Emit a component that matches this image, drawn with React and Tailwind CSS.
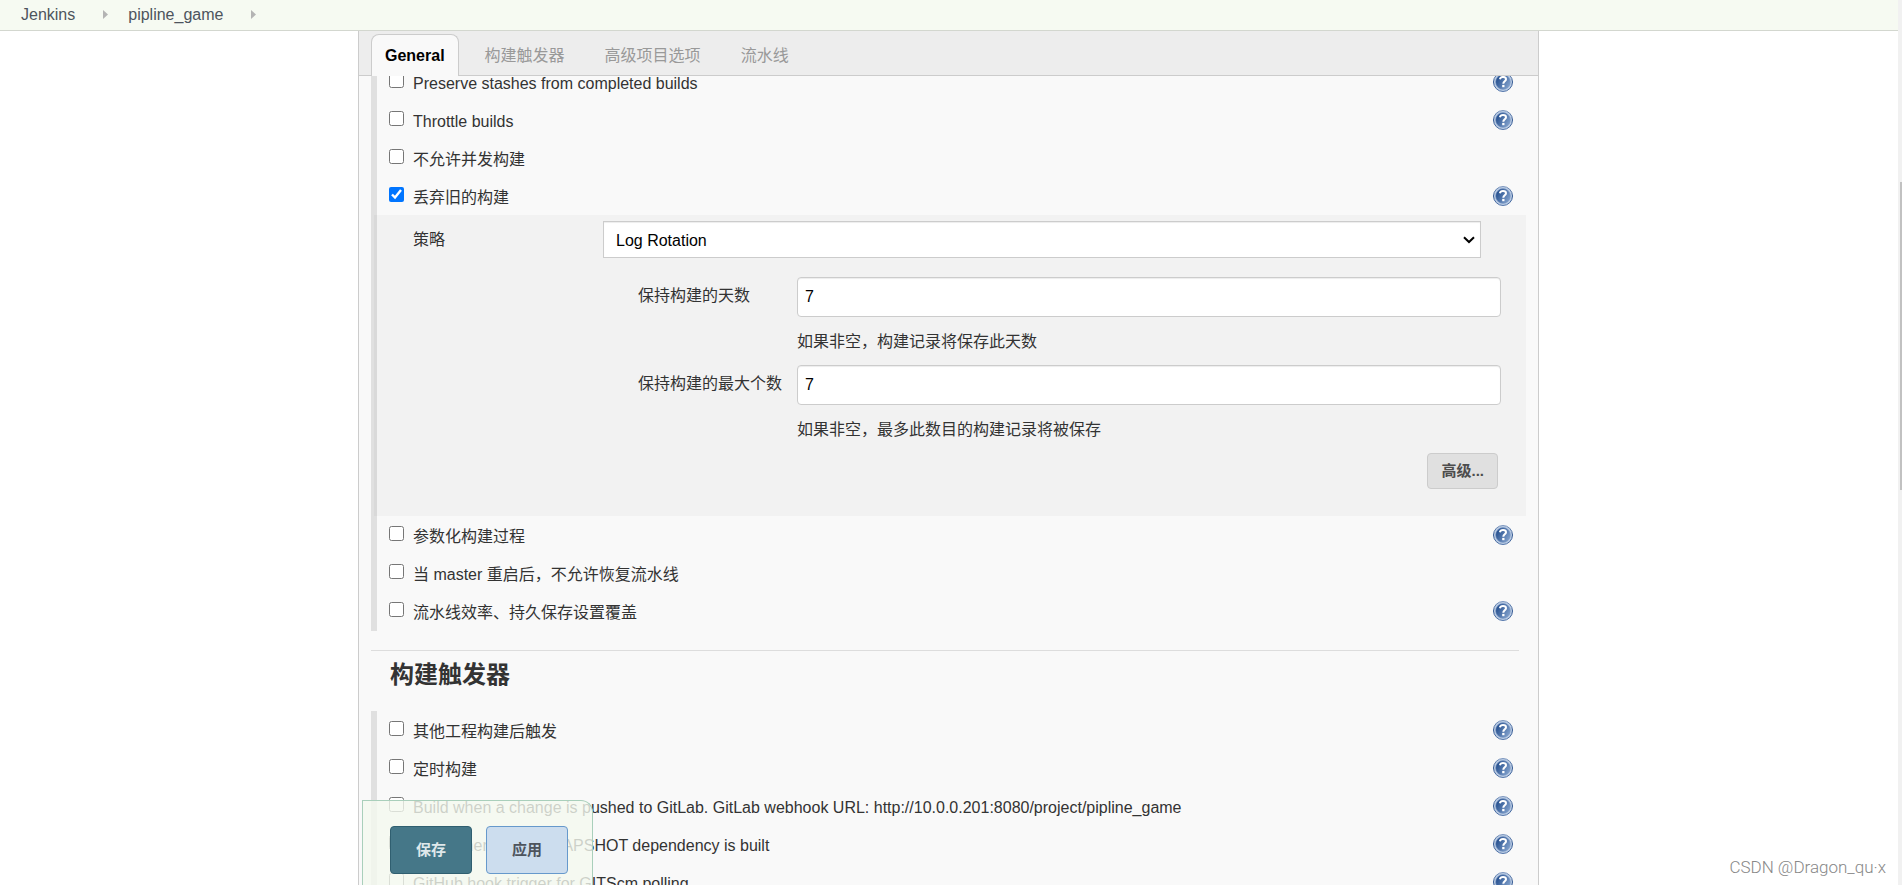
import React from "react";

const FONT = "font-['Liberation_Sans','Noto_Sans_CJK_SC',sans-serif]";

function HelpButton({ topic }) {
  return (
    <button type="button" aria-label={`Help: ${topic}`} className="mt-[9px] size-5 shrink-0">
      <svg viewBox="0 0 20 20" className="size-5" aria-hidden="true">
        <defs>
          <linearGradient id="disc" x1="0" y1="0.2" x2="1" y2="0.8">
            <stop offset="0" stopColor="#1d4889" />
            <stop offset="1" stopColor="#86a5cf" />
          </linearGradient>
          <linearGradient id="rim" x1="0" y1="0" x2="0" y2="1">
            <stop offset="0" stopColor="#7d97bf" />
            <stop offset="0.5" stopColor="#2f5590" />
            <stop offset="1" stopColor="#5577ab" />
          </linearGradient>
        </defs>
        <circle cx="10" cy="10" r="9.5" fill="#bccde4" stroke="url(#rim)" />
        <circle cx="10" cy="10" r="7.4" fill="url(#disc)" stroke="#7f9cc8" strokeWidth="0.6" />
        <path
          d="M6.9 7.2c.3-1.5 1.4-2.3 3.1-2.3 1.9 0 3 .9 3 2.3 0 2-2.7 2.1-2.7 4.5"
          fill="none"
          stroke="#fff"
          strokeWidth="2"
        />
        <rect x="9.2" y="12.9" width="2.3" height="2.3" fill="#fff" />
      </svg>
    </button>
  );
}

function OptionRow({ id, label, help, checked }) {
  return (
    <div className="flex h-[38px] items-start pr-[13px] pl-3">
      <input
        id={id}
        type="checkbox"
        defaultChecked={checked}
        className="mt-[10px] size-[15px] shrink-0 accent-[#0075ff]"
      />
      <label htmlFor={id} className="mt-[9px] ml-2 flex-1 pl-px leading-6 whitespace-nowrap">
        {label}
      </label>
      {help && <HelpButton topic={label} />}
    </div>
  );
}

function NumberField({ id, label, hint }) {
  return (
    <div className="grid grid-cols-[159px_1fr]">
      <label htmlFor={id} className="pt-[7px] leading-6">
        {label}
      </label>
      <input
        id={id}
        type="text"
        defaultValue="7"
        className="h-10 w-full rounded border border-[#ccc] bg-white px-[7px] text-black shadow-[inset_0_1px_1px_rgba(0,0,0,0.075)]"
      />
      <p className="col-start-2 flex h-12 items-center pt-[2px]">{hint}</p>
    </div>
  );
}

function Crumb({ children }) {
  return (
    <li className="flex items-center">
      <a href="#" className="text-[#4d545d]">
        {children}
      </a>
      <svg viewBox="0 0 5 9" className="mr-5 ml-7 h-[9px] w-[5px]" aria-hidden="true">
        <path d="M0 0L5 4.5L0 9Z" fill="#b4b4b4" />
      </svg>
    </li>
  );
}

const TABS = ["构建触发器", "高级项目选项", "流水线"];

const GENERAL_TOP = [
  { id: "stashes", label: "Preserve stashes from completed builds", help: true },
  { id: "throttle", label: "Throttle builds", help: true },
  { id: "concurrent", label: "不允许并发构建" },
  { id: "discard", label: "丢弃旧的构建", help: true, checked: true },
];

const GENERAL_BOTTOM = [
  { id: "params", label: "参数化构建过程", help: true },
  { id: "resume", label: "当 master 重启后，不允许恢复流水线" },
  { id: "durability", label: "流水线效率、持久保存设置覆盖", help: true },
];

const TRIGGERS = [
  { id: "upstream", label: "其他工程构建后触发", help: true },
  { id: "timer", label: "定时构建", help: true },
  {
    id: "gitlab",
    label: "Build when a change is pushed to GitLab. GitLab webhook URL: http://10.0.0.201:8080/project/pipline_game",
    help: true,
  },
  { id: "snapshot", label: "Build whenever a SNAPSHOT dependency is built", help: true },
  { id: "github", label: "GitHub hook trigger for GITScm polling", help: true },
];

export default function App() {
  return (
    <div className={`relative flex h-screen overflow-hidden bg-white text-base text-[#333] ${FONT}`}>
      <div className="flex min-w-0 flex-1 flex-col">
        <nav aria-label="Breadcrumb" className="h-[31px] shrink-0 border-b border-[#d3d7cf] bg-[#f6faf2]">
          <ol className="flex h-[29px] items-center pl-[21px]">
            <Crumb>Jenkins</Crumb>
            <Crumb>pipline_game</Crumb>
          </ol>
        </nav>

        <div className="flex min-h-0 flex-1 pr-px">
          <main className="mx-auto flex w-full max-w-[1181px] flex-col border-x border-[#ccc] bg-[#f9f9f9]">
            <div role="tablist" className="flex h-[45px] shrink-0 items-end border-b border-[#ccc] bg-[#ededed] pl-3">
              <button
                type="button"
                role="tab"
                aria-selected="true"
                className="-mb-px h-[42px] rounded-t-lg border border-b-0 border-[#ccc] bg-[#f9f9f9] px-[13px] font-bold text-black"
              >
                General
              </button>
              <div className="ml-[26px] flex h-[42px] items-center gap-10 pt-[3px]">
                {TABS.map((tab) => (
                  <button key={tab} type="button" role="tab" aria-selected="false" className="text-[#999]">
                    {tab}
                  </button>
                ))}
              </div>
            </div>

            <div className="min-h-0 flex-1 overflow-hidden">
              <form className="-mt-[13px] px-3">
                <section className="border-l-[6px] border-[#e0e0e0] pb-px">
                  {GENERAL_TOP.map((o) => (
                    <OptionRow key={o.id} {...o} />
                  ))}
                  <div className="-ml-[3px] bg-black/[0.027] pt-[6px] pb-[27px]">
                    <div className="flex items-start pr-[45px] pl-[39px]">
                      <label htmlFor="strategy" className="w-[190px] pt-[7px] leading-6">
                        策略
                      </label>
                      <div className="relative flex-1">
                        <select
                          id="strategy"
                          className="block h-[37px] w-full appearance-none border border-[#ccc] bg-white px-3 pt-[2px] text-black shadow-[inset_0_1px_1px_rgba(0,0,0,0.075)]"
                        >
                          <option>Log Rotation</option>
                        </select>
                        <svg
                          viewBox="0 0 12 8"
                          className="pointer-events-none absolute top-[15px] right-[6px] h-2 w-3"
                          aria-hidden="true"
                        >
                          <path d="M1 1.2L6 6L11 1.2" fill="none" stroke="#000" strokeWidth="2" />
                        </svg>
                      </div>
                    </div>
                    <div className="pt-[19px] pr-[25px] pl-[264px]">
                      <NumberField id="days" label="保持构建的天数" hint="如果非空，构建记录将保存此天数" />
                      <NumberField id="count" label="保持构建的最大个数" hint="如果非空，最多此数目的构建记录将被保存" />
                      <div className="flex justify-end pr-[3px]">
                        <button
                          type="button"
                          className="h-9 rounded border border-[#ccc] bg-[#e0e0e0] px-[13px] text-[15px] font-bold text-[#4d4d4d]"
                        >
                          高级...
                        </button>
                      </div>
                    </div>
                  </div>
                  {GENERAL_BOTTOM.map((o) => (
                    <OptionRow key={o.id} {...o} />
                  ))}
                </section>

                <section>
                  <div className="mt-[19px] mr-[7px] border-t border-[#ddd] pt-2 pb-5 pl-[19px]">
                    <h2 className="text-2xl leading-8 font-bold">构建触发器</h2>
                  </div>
                  <div className="border-l-[6px] border-[#e0e0e0]">
                    {TRIGGERS.map((o) => (
                      <OptionRow key={o.id} {...o} />
                    ))}
                  </div>
                </section>
              </form>
            </div>
          </main>
        </div>
      </div>

      <div className="w-1 shrink-0 bg-[#f1f1f1] pt-[182px] pl-[2px]">
        <div className="h-[308px] bg-[#c1c1c1]" />
      </div>

      <div className="pointer-events-none absolute inset-x-0 bottom-0 pr-[5px]">
        <div className="mx-auto max-w-[1181px] pl-1">
          <div className="pointer-events-auto flex h-[85px] w-[231px] gap-[14px] rounded-tr-xl border border-b-0 border-[#a9cfbb] bg-[#f4f9ef]/80 pt-[25px] pl-[27px]">
            <button
              type="button"
              className="h-12 w-[82px] rounded border border-[#305f70] bg-[#457788] text-[15px] font-bold text-[#dfe8eb]"
            >
              保存
            </button>
            <button
              type="button"
              className="h-12 w-[82px] rounded border border-[#6699cc] bg-[#ccddee] text-[15px] font-bold text-[#4d545d]"
            >
              应用
            </button>
          </div>
        </div>
      </div>

      <p className="absolute right-4 bottom-[6px] font-['Roboto',sans-serif] text-[17px] leading-6 font-light text-[#888]">
        CSDN @Dragon_qu·x
      </p>
    </div>
  );
}
